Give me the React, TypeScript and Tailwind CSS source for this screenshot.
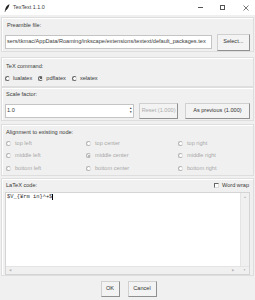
const font = "font-['Liberation_Sans','Noto_Sans',Arial,sans-serif]";

function Radio({ on, dim }: { on?: boolean; dim?: boolean }) {
  return (
    <span
      className={`inline-flex items-center justify-center w-[5px] h-[5px] rounded-full border-[0.8px] bg-white shrink-0 ${
        dim ? "border-[#b4b4b4] border-r-[#e0e0e0]" : "border-[#666] border-r-[#ddd]"
      }`}
    >
      {on && <span className={`w-[2px] h-[2px] rounded-full ${dim ? "bg-[#a0a0a0]" : "bg-[#333]"}`} />}
    </span>
  );
}

function Frame({ className, children }: { className: string; children: React.ReactNode }) {
  return (
    <div className={`border border-[#dedede] shadow-[inset_1px_1px_0_#fff] px-[3px] ${className}`}>{children}</div>
  );
}

function Btn({ className, children, dim }: { className: string; children: React.ReactNode; dim?: boolean }) {
  return (
    <div
      className={`flex items-center justify-center bg-[#f3f3f3] border border-[#d0d0d0] border-r-[#909090] border-b-[#909090] ${
        dim ? "text-[#ababab]" : "text-[#333]"
      } ${className}`}
    >
      {children}
    </div>
  );
}

const aligns = [
  ["top left", "top center", "top right"],
  ["middle left", "middle center", "middle right"],
  ["bottom left", "bottom center", "bottom right"],
];

export default function App() {
  return (
    <div className={`w-[255px] h-[300px] bg-[#f0f0f0] ${font} text-[5.6px] leading-none text-[#3a3a3a] overflow-hidden flex flex-col`}>
      {/* title bar */}
      <div className="h-[15px] bg-white flex items-center shrink-0">
        <svg width="6" height="8" viewBox="0 0 6 8" className="ml-[4px]">
          <path d="M5.5 0.3 C3.2 1 1.6 3 1 6.2 L0.6 7.8 L1.3 7.8 L1.6 6.4 C3.6 5.6 5 3 5.5 0.3 Z" fill="#222" />
        </svg>
        <span className="ml-[3px] text-[5.4px] text-[#3a3a3a]">TexText 1.1.0</span>
        <div className="ml-auto flex items-center">
          <span className="w-[5px] h-[0.8px] bg-[#555] mr-[17px]" />
          <span className="w-[5px] h-[5px] border-[0.8px] border-[#555] mr-[18px]" />
          <svg width="6" height="6" viewBox="0 0 6 6" className="mr-[6px]">
            <path d="M0.5 0.5 L5.5 5.5 M5.5 0.5 L0.5 5.5" stroke="#555" strokeWidth="0.8" />
          </svg>
        </div>
      </div>

      <div className="flex flex-col px-[1px] pt-[2px]">
        {/* preamble */}
        <Frame className="h-[35px] flex flex-col">
          <span className="mt-[5px] ml-[2px]">Preamble file:</span>
          <div className="flex items-center mt-[5px] gap-[5px]">
            <div className="w-[210px] h-[14px] bg-white border border-[#c4c4c4] flex items-center overflow-hidden whitespace-nowrap pl-[1px]">
              sers/tkmac/AppData/Roaming/inkscape/extensions/textext/default_packages.tex
            </div>
            <Btn className="w-[34px] h-[17px]">Select...</Btn>
          </div>
        </Frame>

        {/* tex command */}
        <Frame className="h-[30px] mt-[5px] flex flex-col">
          <span className="mt-[6px] ml-[1px]">TeX command:</span>
          <div className="flex items-center mt-[6px] gap-[3px]">
            <Radio />
            <span className="mr-[3px]">lualatex</span>
            <Radio on />
            <span className="mr-[3px]">pdflatex</span>
            <Radio />
            <span>xelatex</span>
          </div>
        </Frame>

        {/* scale factor */}
        <Frame className="h-[34px] flex flex-col">
          <span className="mt-[4px] ml-[1px]">Scale factor:</span>
          <div className="flex items-center mt-[5px]">
            <div className="w-[131px] h-[14px] bg-white border border-[#c4c4c4] flex items-center pl-[1px]">
              <span>1.0</span>
              <div className="ml-auto mr-[1px] flex flex-col items-center gap-[1px] text-[3px] text-[#333]">
                <span>▲</span>
                <span>▼</span>
              </div>
            </div>
            <Btn dim className="ml-[5px] w-[39px] h-[16px]">Reset (1.000)</Btn>
            <Btn className="ml-[7px] w-[66px] h-[16px]">As previous (1.000)</Btn>
          </div>
        </Frame>

        {/* alignment */}
        <Frame className="h-[52px] mt-[3px] flex flex-col">
          <span className="mt-[5px] ml-[1px]">Alignment to existing node:</span>
          <div className="grid grid-cols-[80px_92px_1fr] gap-y-[7px] mt-[5px] ml-[1px] text-[#a8a8a8]">
            {aligns.flat().map((a) => (
              <div key={a} className="flex items-center gap-[4px]">
                <Radio dim on={a === "middle center"} />
                <span>{a}</span>
              </div>
            ))}
          </div>
        </Frame>

        {/* latex code */}
        <Frame className="h-[98px] mt-[2px] flex flex-col">
          <div className="flex items-center mt-[4px]">
            <span className="ml-[1px]">LaTeX code:</span>
            <div className="ml-auto mr-[1px] flex items-center gap-[3px]">
              <span className="w-[5px] h-[5px] bg-white border-[0.8px] border-[#666] border-r-[#ddd] border-b-[#ddd]" />
              <span>Word wrap</span>
            </div>
          </div>
          <div className="mt-[3px] h-[87px] flex flex-col border border-[#d4d4d4]">
            <div className="flex flex-1">
              <div className="flex-1 bg-white px-[1px] pt-[1px] font-['Liberation_Mono','Noto_Sans_CJK_JP',monospace] text-[5.4px] text-[#2a2a2a]">
                $V_{"{"}¥rm in{"}"}^+$<span className="inline-block w-[0.8px] h-[6px] bg-black align-middle" />
              </div>
              <div className="w-[9px] bg-[#f0f0f0] border-l border-[#e4e4e4] flex justify-center text-[3px] text-[#b4b4b4] pt-[3px]">▲</div>
            </div>
            <div className="h-[8px] bg-[#f0f0f0] border-t border-[#e4e4e4] flex items-center text-[3px] text-[#b4b4b4] px-[3px]">
              <span>◀</span>
              <span className="ml-auto mr-[9px]">▶</span>
              <span>▼</span>
            </div>
          </div>
        </Frame>

        {/* buttons */}
        <div className="flex justify-center gap-[8px] mt-[5px] ml-[2px]">
          <Btn className="w-[19px] h-[16px]">OK</Btn>
          <Btn className="w-[29px] h-[16px]">Cancel</Btn>
        </div>
      </div>
    </div>
  );
}
